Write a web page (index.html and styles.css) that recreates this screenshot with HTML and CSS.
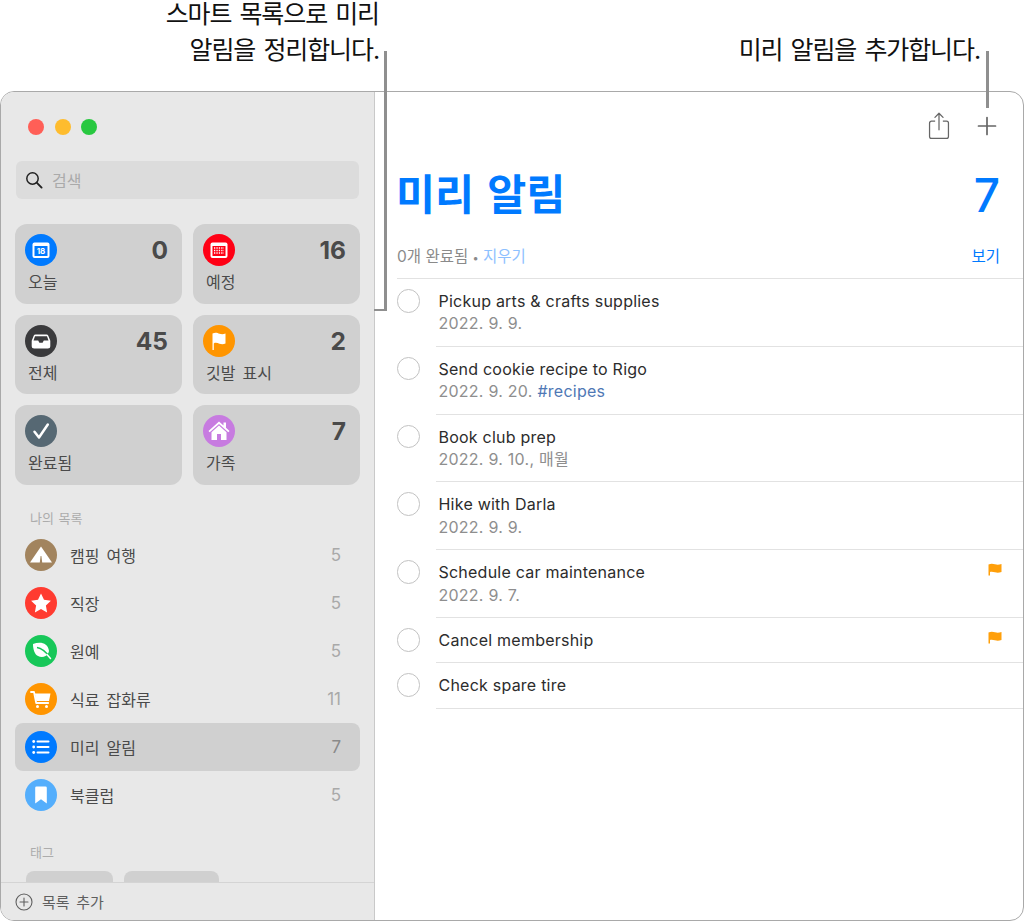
FILE: index.html
```html
<!DOCTYPE html>
<html lang="ko">
<head>
<meta charset="utf-8">
<title>미리 알림</title>
<link rel="stylesheet" href="styles.css">
</head>
<body>
<div class="page">
  <header class="callouts">
    <p class="callout callout-left">스마트 목록으로 미리<br>알림을 정리합니다.</p>
    <p class="callout callout-right">미리 알림을 추가합니다.</p>
  </header>
  <div class="window">
    <aside class="sidebar">
      <div class="sidebar-scroll">
        <div class="lights"><i class="light red"></i><i class="light yellow"></i><i class="light green"></i></div>
        <div class="search">
          <svg class="search-icon" viewBox="0 0 18 18"><circle cx="7.5" cy="7.5" r="5.7" fill="none" stroke="#222" stroke-width="1.5"/><path d="M11.7 11.7 16.6 16.6" stroke="#222" stroke-width="1.9" stroke-linecap="round"/></svg>
          <span>검색</span>
        </div>
        <div class="cards">
          <div class="card">
            <div class="card-top">
              <svg class="disc" viewBox="0 0 32 32"><circle cx="16" cy="16" r="16" fill="#007aff"/><rect x="7.5" y="8.5" width="17" height="15.5" rx="2" fill="#fff"/><rect x="9.5" y="12" width="13" height="10" fill="#007aff"/><text x="16" y="20.4" class="cal-num">18</text></svg>
              <b class="card-count">0</b>
            </div>
            <div class="card-label">오늘</div>
          </div>
          <div class="card">
            <div class="card-top">
              <svg class="disc" viewBox="0 0 32 32"><circle cx="16" cy="16" r="16" fill="#ff0015"/><rect x="7.5" y="8.5" width="17" height="15.5" rx="2" fill="#fff"/><rect x="9.5" y="12" width="13" height="10" fill="#ff0015"/><path d="M11 14h10M11 16.5h10M11 19h10" stroke="#fff" stroke-width="1.3" stroke-dasharray="1.3 1.1"/></svg>
              <b class="card-count">16</b>
            </div>
            <div class="card-label">예정</div>
          </div>
          <div class="card">
            <div class="card-top">
              <svg class="disc" viewBox="0 0 32 32"><circle cx="16" cy="16" r="16" fill="#3a3a3c"/><path d="M10.5 9.5h11a2 2 0 0 1 1.8 1.2l2 5V21a2.500 2.500 0 0 1-2.500 2.500H9.200A2.500 2.500 0 0 1 6.700 21v-5.300l2-5a2 2 0 0 1 1.800-1.200Z" fill="#fff"/><path d="M8.500 15.500h4.700l1.200 2.300h3.200l1.200-2.300h4.700L22 11.200H10Z" fill="#3a3a3c"/></svg>
              <b class="card-count">45</b>
            </div>
            <div class="card-label">전체</div>
          </div>
          <div class="card">
            <div class="card-top">
              <svg class="disc" viewBox="0 0 32 32"><circle cx="16" cy="16" r="16" fill="#ff9500"/><path d="M9.500 25V8.500c3-1.500 5 -.5 7 .2s4 .6 6-.2v10c-2 .9-4 .9-6 .2s-4-1.300-5.700-.3V25Z" fill="#fff"/></svg>
              <b class="card-count">2</b>
            </div>
            <div class="card-label">깃발 표시</div>
          </div>
          <div class="card">
            <div class="card-top">
              <svg class="disc" viewBox="0 0 32 32"><circle cx="16" cy="16" r="16" fill="#566873"/><path d="M9.500 16.800 14 22.500 22.800 9.500" fill="none" stroke="#fff" stroke-width="2.500" stroke-linecap="round" stroke-linejoin="round"/></svg>
            </div>
            <div class="card-label">완료됨</div>
          </div>
          <div class="card">
            <div class="card-top">
              <svg class="disc" viewBox="0 0 32 32"><circle cx="16" cy="16" r="16" fill="#c77be0"/><path d="M16 6.500 5.500 16l1.200 1.300L16 9l9.300 8.300 1.200-1.300-3.500-3.200V7.500h-2.500v3Z" fill="#fff"/><path d="M16 10.500 8.500 17.200V25h15v-7.800ZM14 19h4v6h-4Z" fill="#fff" fill-rule="evenodd"/></svg>
              <b class="card-count">7</b>
            </div>
            <div class="card-label">가족</div>
          </div>
        </div>
        <h2 class="section-title lists-title">나의 목록</h2>
        <ul class="lists">
          <li class="list-row">
            <svg class="disc" viewBox="0 0 32 32"><circle cx="16" cy="16" r="16" fill="#a2845e"/><path d="M16 7.500 5 23.500h9.800L15.600 17h.8l.8 6.500H27Z" fill="#fff"/></svg>
            <span class="list-name">캠핑 여행</span><span class="list-count">5</span>
          </li>
          <li class="list-row">
            <svg class="disc" viewBox="0 0 32 32"><circle cx="16" cy="16" r="16" fill="#ff3b30"/><path d="m16 6.500 3 6.300 6.900.9-5 4.800 1.200 6.900-6.100-3.300-6.100 3.300 1.200-6.900-5-4.800 6.900-.9Z" fill="#fff"/></svg>
            <span class="list-name">직장</span><span class="list-count">5</span>
          </li>
          <li class="list-row">
            <svg class="disc" viewBox="0 0 32 32"><circle cx="16" cy="16" r="16" fill="#17c759"/><path d="M8 9c7-2.500 15-1.500 16 7-.3 1.200-.5 2-1 2.500-1.500 3-6 4.500-10 2.500C9.500 19.500 8 14 8 9Z" fill="#fff"/><path d="M12 12.500c4 .5 8 3 13.500 10.500" fill="none" stroke="#17c759" stroke-width="1.300"/><path d="M22 19.500l3.500 4" stroke="#fff" stroke-width="1.500" stroke-linecap="round"/></svg>
            <span class="list-name">원예</span><span class="list-count">5</span>
          </li>
          <li class="list-row">
            <svg class="disc" viewBox="0 0 32 32"><circle cx="16" cy="16" r="16" fill="#ff9500"/><path d="M6 9h3l2.200 11h12" fill="none" stroke="#fff" stroke-width="1.800" stroke-linecap="round" stroke-linejoin="round"/><path d="M9.800 10.500H25.500l-1.500 7.500H11.300Z" fill="#fff"/><circle cx="12.500" cy="23.500" r="1.500" fill="#fff"/><circle cx="21.500" cy="23.500" r="1.500" fill="#fff"/></svg>
            <span class="list-name">식료 잡화류</span><span class="list-count">11</span>
          </li>
          <li class="list-row selected">
            <svg class="disc" viewBox="0 0 32 32"><circle cx="16" cy="16" r="16" fill="#007aff"/><path d="M12.500 10.500h11M12.500 16h11M12.500 21.500h11" stroke="#fff" stroke-width="2" stroke-linecap="round"/><circle cx="8.700" cy="10.500" r="1.400" fill="#fff"/><circle cx="8.700" cy="16" r="1.400" fill="#fff"/><circle cx="8.700" cy="21.500" r="1.400" fill="#fff"/></svg>
            <span class="list-name">미리 알림</span><span class="list-count">7</span>
          </li>
          <li class="list-row">
            <svg class="disc" viewBox="0 0 32 32"><circle cx="16" cy="16" r="16" fill="#54aefc"/><path d="M11.500 7.500h9a1.300 1.300 0 0 1 1.300 1.300V24.500L16 20.300 10.200 24.500V8.800a1.300 1.300 0 0 1 1.300-1.300Z" fill="#fff"/></svg>
            <span class="list-name">북클럽</span><span class="list-count">5</span>
          </li>
        </ul>
        <h2 class="section-title tags-title">태그</h2>
        <div class="tags"><span class="tag tag-a"></span><span class="tag tag-b"></span></div>
      </div>
      <footer class="add-list">
        <svg class="add-icon" viewBox="0 0 18 18"><circle cx="9" cy="9" r="8" fill="none" stroke="#5f5f5f" stroke-width="1.100"/><path d="M9 5v8M5 9h8" stroke="#5f5f5f" stroke-width="1.100" stroke-linecap="round"/></svg>
        <span>목록 추가</span>
      </footer>
    </aside>
    <main class="main">
      <div class="toolbar">
        <svg class="share" viewBox="0 0 22 28"><path d="M7 9.500H3.200A2 2 0 0 0 1.200 11.500v13.800a2 2 0 0 0 2 2h15.600a2 2 0 0 0 2-2V11.500a2 2 0 0 0-2-2H15" fill="none" stroke="#666" stroke-width="1.300"/><path d="M11 18.500V1.500M6.800 5.600 11 1.300l4.200 4.300" fill="none" stroke="#666" stroke-width="1.300" stroke-linecap="round" stroke-linejoin="round"/></svg>
        <svg class="plus" viewBox="0 0 20 20"><path d="M10 1.500v17M1.500 10h17" stroke="#666" stroke-width="1.700" stroke-linecap="round"/></svg>
      </div>
      <div class="heading">
        <h1>미리 알림</h1>
        <span class="heading-count">7</span>
      </div>
      <div class="done-bar">
        <span>0개 완료됨 <i class="dot">•</i> <span class="clear">지우기</span></span>
        <span class="show">보기</span>
      </div>
      <ul class="tasks">
        <li class="task"><i class="check"></i><div class="task-body"><div class="task-title">Pickup arts &amp; crafts supplies</div><div class="task-meta">2022. 9. 9.</div></div></li>
        <li class="task"><i class="check"></i><div class="task-body"><div class="task-title">Send cookie recipe to Rigo</div><div class="task-meta">2022. 9. 20. <span class="hash">#recipes</span></div></div></li>
        <li class="task"><i class="check"></i><div class="task-body"><div class="task-title">Book club prep</div><div class="task-meta">2022. 9. 10., 매월</div></div></li>
        <li class="task"><i class="check"></i><div class="task-body"><div class="task-title">Hike with Darla</div><div class="task-meta">2022. 9. 9.</div></div></li>
        <li class="task"><i class="check"></i><div class="task-body"><div class="task-title">Schedule car maintenance</div><div class="task-meta">2022. 9. 7.</div>
          <svg class="flag" viewBox="0 0 14 13"><path d="M.5 12.500V1.500C3 .5 5 .8 7 1.300s4 .5 6.500-.3v8c-2.500.8-4.500.8-6.500.3S3.500 8.500 2 9v3.500Z" fill="#ff9f0a"/></svg></div></li>
        <li class="task"><i class="check"></i><div class="task-body"><div class="task-title">Cancel membership</div>
          <svg class="flag" viewBox="0 0 14 13"><path d="M.5 12.500V1.500C3 .5 5 .8 7 1.300s4 .5 6.500-.3v8c-2.500.8-4.500.8-6.500.3S3.500 8.500 2 9v3.500Z" fill="#ff9f0a"/></svg></div></li>
        <li class="task"><i class="check"></i><div class="task-body"><div class="task-title">Check spare tire</div></div></li>
      </ul>
    </main>
  </div>
  <div class="leader leader-left"></div>
  <div class="leader leader-right"></div>
</div>
</body>
</html>
```

FILE: styles.css
```css
* { box-sizing: border-box; }
html, body { margin: 0; padding: 0; background: #fff; }
body {
  font-family: Inter, "Noto Sans CJK KR", sans-serif;
  color: #222;
  overflow: hidden;
}
ul { list-style: none; margin: 0; padding: 0; }
h1, h2, p { margin: 0; }
i { font-style: normal; }

.page { position: relative; width: 1027px; height: 923px; }

.callouts {
  display: flex;
  justify-content: space-between;
  height: 91px;
  padding-right: 47px;
  font-size: 25px;
  letter-spacing: -1.100px;
  word-spacing: 2.200px;
  line-height: 36px;
  color: #111;
}
.callout-left { width: 379px; text-align: right; margin-top: -4px; }
.callout-right { margin-top: 32px; }

.leader { position: absolute; background: #8f8f8f; }
.leader-left { left: 374px; top: 51px; width: 13px; height: 260px; background: none; border-right: 3px solid #8f8f8f; border-bottom: 2px solid #8f8f8f; }
.leader-right { left: 986px; top: 51px; width: 3px; height: 57px; }

.window {
  display: flex;
  width: 1024px;
  height: 830px;
  border: 1px solid #a9a9a9;
  border-radius: 14px;
  overflow: hidden;
  background: #fff;
}

.sidebar {
  display: flex;
  flex-direction: column;
  width: 374px;
  flex: none;
  background: #e8e8e8;
  border-right: 1px solid #c9c9c9;
}
.sidebar-scroll { flex: 1; min-height: 0; overflow: hidden; padding: 0 13px 0 14px; }

.lights { display: flex; gap: 10.500px; padding: 27px 0 0 13px; height: 69px; }
.light { width: 16px; height: 16px; border-radius: 50%; }
.red { background: #ff5f57; }
.yellow { background: #febc2e; }
.green { background: #28c840; }

.search {
  display: flex;
  align-items: center;
  gap: 9px;
  margin-left: 1px;
  width: 343px;
  height: 38px;
  padding-left: 9px;
  background: #dcdcdc;
  border-radius: 6px;
  font-size: 16px;
  color: #aaa;
}
.search-icon { width: 18px; height: 18px; }

.cards {
  display: grid;
  grid-template-columns: 167px 167px;
  grid-auto-rows: 79.500px;
  column-gap: 11px;
  row-gap: 11px;
  margin-top: 25px;
}
.card { background: #d0d0d0; border-radius: 12px; padding: 10px 14px 0 10px; }
.card-top { display: flex; justify-content: space-between; align-items: center; height: 32px; }
.card-count { font-size: 24.500px; font-weight: 700; color: #4a4a4a; line-height: 32px; }
.card-label { margin: 4px 0 0 3px; font-size: 16px; line-height: 24px; color: #4a4a4a; word-spacing: 2.500px; }
.disc { display: block; width: 32px; height: 32px; flex: none; }
.cal-num { font: 700 8px Inter, sans-serif; fill: #fff; text-anchor: middle; }

.section-title { font-size: 13px; font-weight: 400; color: #acacac; line-height: 18px; padding-left: 15px; word-spacing: 1px; }
.lists-title { margin-top: 24px; }

.lists { margin-top: 4px; }
.list-row {
  display: flex;
  align-items: center;
  height: 48px;
  width: 345px;
  padding: 0 19px 0 10px;
  border-radius: 8px;
  color: #4a4a4a;
  font-size: 16px;
}
.selected { background: #d0d0d0; }
.list-name { margin-left: 13px; flex: 1; word-spacing: 2.500px; }
.list-count { font-size: 17px; color: #a9a9a9; }
.selected .list-count { color: #8a8a8a; }

.tags-title { margin-top: 24px; }
.tags { display: flex; gap: 11px; margin: 10px 0 0 11px; }
.tag { height: 30px; border-radius: 8px; background: #d0d0d0; }
.tag-a { width: 87px; }
.tag-b { width: 95px; }

.add-list {
  display: flex;
  align-items: center;
  flex: none;
  gap: 9px;
  height: 38px;
  padding-left: 14px;
  background: #e8e8e8;
  border-top: 1px solid #d4d4d4;
  font-size: 15px;
  word-spacing: 2.500px;
  color: #5f5f5f;
}
.add-icon { width: 18px; height: 18px; }

.main { flex: 1; min-width: 0; padding-left: 22px; }
.toolbar { display: flex; justify-content: flex-end; align-items: center; gap: 27px; height: 46px; margin-top: 11px; padding-right: 26px; }
.share { width: 22px; height: 27px; margin-bottom: 2px; }
.plus { width: 20px; height: 20px; }

.heading { display: flex; justify-content: space-between; align-items: center; height: 60px; margin-top: 16px; padding-right: 23px; color: #007aff; }
.heading h1 { margin-left: -1px; font-size: 42.500px; font-weight: 700; word-spacing: 3px; line-height: 60px; }
.heading-count { font-size: 46px; font-weight: 500; line-height: 60px; }

.done-bar {
  display: flex;
  justify-content: space-between;
  align-items: center;
  height: 54px;
  padding: 7px 23px 0 0;
  border-bottom: 1px solid #e2e2e2;
  font-size: 15.500px;
  color: #8a8a8a;
}
.dot { font-size: 11px; }
.clear { color: #8ec1ff; }
.show { color: #007aff; }

.task { display: flex; }
.check { flex: none; width: 23.500px; height: 23.500px; margin: 10px 15.500px 0 -0.500px; border: 1.300px solid #c2c2c2; border-radius: 50%; }
.task-body { position: relative; flex: 1; padding: 11px 0 11px 3px; border-bottom: 1px solid #e2e2e2; }
.task-title, .task-meta { font-size: 16px; line-height: 22.400px; }
.task-title { color: #2c2c2c; letter-spacing: 0.230px; }
.task-meta { color: #8e8e8e; letter-spacing: 0.250px; }
.hash { color: #4f78b5; }
.flag { position: absolute; right: 21px; top: 13px; width: 14px; height: 13px; }
```
